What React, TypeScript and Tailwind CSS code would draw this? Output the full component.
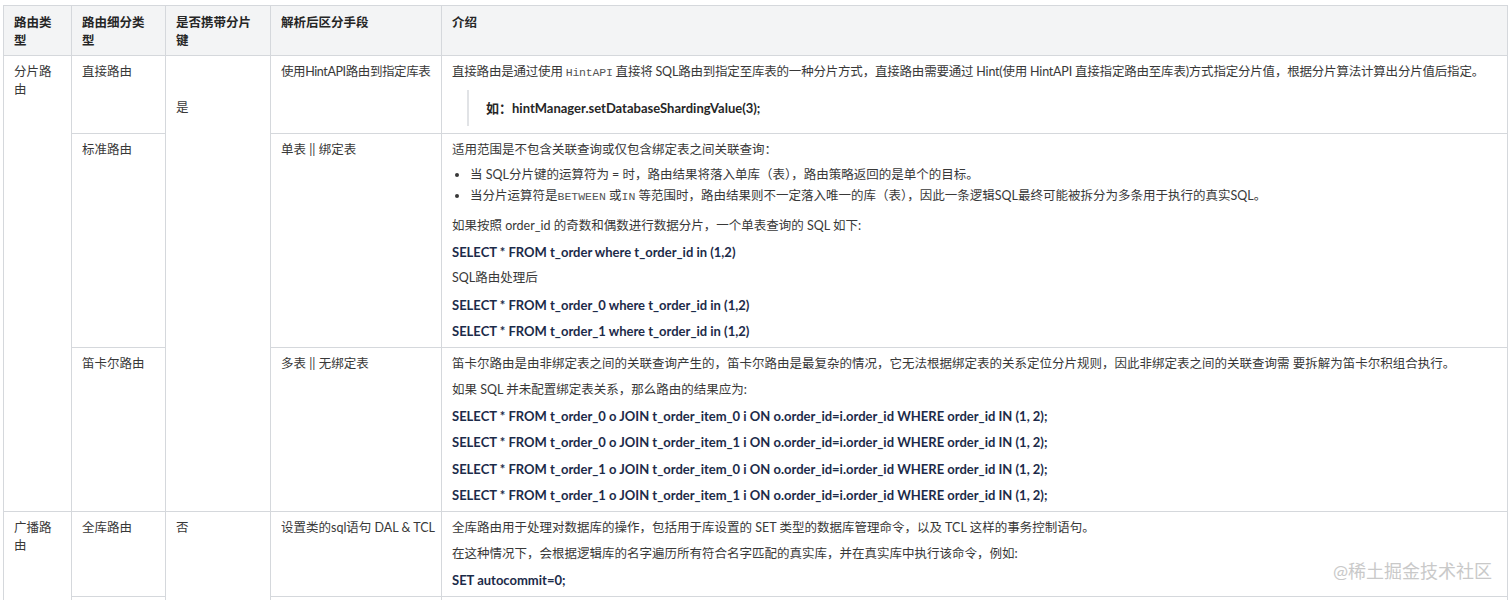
import React from "react"

const font = { fontFamily: 'Lato, "Noto Sans CJK SC", sans-serif' }

function Code({ children }: { children: React.ReactNode }) {
  return <code className="font-['Liberation_Mono',monospace] text-[11.5px] leading-none text-[#555]">{children}</code>
}

function Sql({ children }: { children: React.ReactNode }) {
  return <p className="mt-[8.2px] text-[13px] font-bold text-[#1c2b49]">{children}</p>
}

const th = "border border-[#d5d8dc] bg-[#f3f4f5] px-[10px] pt-2 pb-[5px] text-left align-top font-bold text-[#262626]"
const td = "border border-[#d5d8dc] px-[10px] pt-[7px] pb-[7px] align-top"
const tdNarrow = "border border-[#d5d8dc] pl-[10px] pr-[5px] pt-[7px] pb-[7px] align-top"

export default function App() {
  return (
    <div className="relative min-h-[600px] bg-white pl-[3px] pt-[5px]" style={font}>
      <table className="w-[1505px] table-fixed border-collapse text-[12.5px] leading-[18px] text-[#383838]">
        <colgroup>
          <col className="w-[68px]" />
          <col className="w-[94px]" />
          <col className="w-[105px]" />
          <col className="w-[171px]" />
          <col />
        </colgroup>
        <thead>
          <tr>
            <th className={th}>路由类型</th>
            <th className={th}>路由细分类型</th>
            <th className={th}>是否携带分片键</th>
            <th className={th}>解析后区分手段</th>
            <th className={th}>介绍</th>
          </tr>
        </thead>
        <tbody>
          <tr>
            <td className={td} rowSpan={3}>分片路由</td>
            <td className={td}>直接路由</td>
            <td className={`${td} pt-[43px]`} rowSpan={3}>是</td>
            <td className={`${tdNarrow} tracking-[-0.4px]`}>使用HintAPI路由到指定库表</td>
            <td className={`${tdNarrow} pb-[5px]`}>
              <p className="tracking-[-0.2px]">
                直接路由是通过使用 <Code>HintAPI</Code> 直接将 SQL路由到指定至库表的一种分片方式，直接路由需要通过 Hint(使用 HintAPI 直接指定路由至库表)方式指定分片值，根据分片算法计算出分片值后指定。
              </p>
              <blockquote className="ml-[15px] mt-[9px] border-l-2 border-[#e1e3e6] py-[9px] pl-[17px]">
                <p className="text-[13px] font-bold text-[#262626]">如：hintManager.setDatabaseShardingValue(3);</p>
              </blockquote>
            </td>
          </tr>
          <tr>
            <td className={td}>标准路由</td>
            <td className={tdNarrow}>单表 || 绑定表</td>
            <td className={tdNarrow}>
              <p>适用范围是不包含关联查询或仅包含绑定表之间关联查询：</p>
              <ul className="mt-[7px] list-disc pl-[18px]">
                <li>当 SQL分片键的运算符为 = 时，路由结果将落入单库（表），路由策略返回的是单个的目标。</li>
                <li className="mt-[3px]">
                  当分片运算符是<Code>BETWEEN</Code> 或<Code>IN</Code> 等范围时，路由结果则不一定落入唯一的库（表），因此一条逻辑SQL最终可能被拆分为多条用于执行的真实SQL。
                </li>
              </ul>
              <p className="mt-[12px]">如果按照 order_id 的奇数和偶数进行数据分片，一个单表查询的 SQL 如下:</p>
              <Sql>SELECT * FROM t_order where t_order_id in (1,2)</Sql>
              <p className="mt-[8.2px]">SQL路由处理后</p>
              <Sql>SELECT * FROM t_order_0 where t_order_id in (1,2)</Sql>
              <Sql>SELECT * FROM t_order_1 where t_order_id in (1,2)</Sql>
            </td>
          </tr>
          <tr>
            <td className={td}>笛卡尔路由</td>
            <td className={tdNarrow}>多表 || 无绑定表</td>
            <td className={tdNarrow}>
              <p>笛卡尔路由是由非绑定表之间的关联查询产生的，笛卡尔路由是最复杂的情况，它无法根据绑定表的关系定位分片规则，因此非绑定表之间的关联查询需 要拆解为笛卡尔积组合执行。</p>
              <p className="mt-[8.2px]">如果 SQL 并未配置绑定表关系，那么路由的结果应为:</p>
              <Sql>SELECT * FROM t_order_0 o JOIN t_order_item_0 i ON o.order_id=i.order_id WHERE order_id IN (1, 2);</Sql>
              <Sql>SELECT * FROM t_order_0 o JOIN t_order_item_1 i ON o.order_id=i.order_id WHERE order_id IN (1, 2);</Sql>
              <Sql>SELECT * FROM t_order_1 o JOIN t_order_item_0 i ON o.order_id=i.order_id WHERE order_id IN (1, 2);</Sql>
              <Sql>SELECT * FROM t_order_1 o JOIN t_order_item_1 i ON o.order_id=i.order_id WHERE order_id IN (1, 2);</Sql>
            </td>
          </tr>
          <tr>
            <td className={td} rowSpan={2}>广播路由</td>
            <td className={td}>全库路由</td>
            <td className={td} rowSpan={2}>否</td>
            <td className={tdNarrow}>设置类的sql语句 DAL &amp; TCL</td>
            <td className={tdNarrow}>
              <p>全库路由用于处理对数据库的操作，包括用于库设置的 SET 类型的数据库管理命令，以及 TCL 这样的事务控制语句。</p>
              <p className="mt-[8.2px]">在这种情况下，会根据逻辑库的名字遍历所有符合名字匹配的真实库，并在真实库中执行该命令，例如:</p>
              <Sql>SET autocommit=0;</Sql>
            </td>
          </tr>
          <tr>
            <td className={td}>全库表路由</td>
            <td className={tdNarrow}>DQL、DML、DDL</td>
            <td className={tdNarrow}>
              <p>全库表路由用于处理对数据库中与其逻辑表相关的所有真实表的操作，主要包括不带分片键的 DQL 和 DML，以及 DDL 等。</p>
            </td>
          </tr>
        </tbody>
      </table>
      <div className="absolute left-[1333px] top-[560px] text-[18px] leading-[22px] text-[#c9c9c9]">@稀土掘金技术社区</div>
    </div>
  )
}
